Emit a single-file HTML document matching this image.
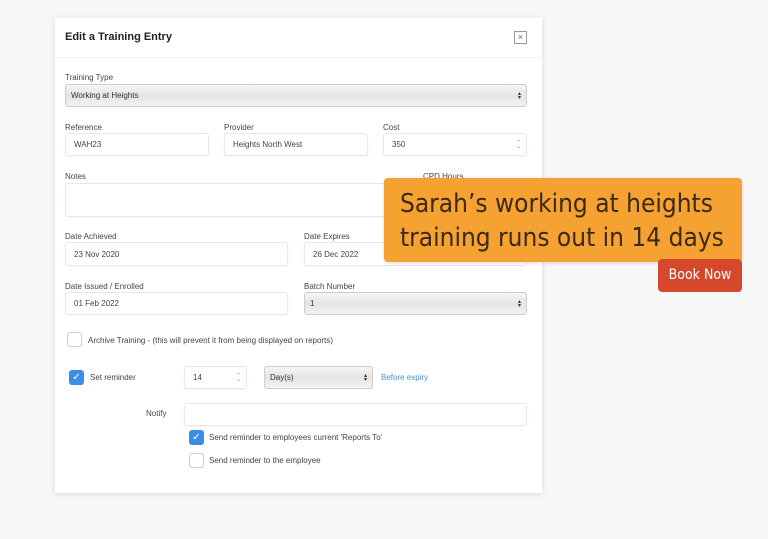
<!DOCTYPE html>
<html><head><meta charset="utf-8"><style>
*{box-sizing:border-box;margin:0;padding:0}
body{width:768px;height:539px;background:#f7f7f7;font-family:"Liberation Sans",sans-serif;color:#333;position:relative;overflow:hidden}
.a{position:absolute}
.modal{left:55px;top:18px;width:487px;height:475px;background:#fff;box-shadow:0 1px 6px rgba(0,0,0,.12)}
.hdr{left:55px;top:18px;width:487px;height:40px;border-bottom:1px solid #f0f0f0}
.lbl{font-size:8px;color:#444}
.in{border:1px solid #e8e8e8;border-radius:3px;background:#fff;font-size:8px;color:#444;padding-left:8px;display:flex;align-items:center;box-shadow:0 1px 2px rgba(0,0,0,.04)}
.sel{border:1px solid #ccc;border-radius:3px;background:linear-gradient(#f6f6f6,#e4e4e4 50%,#f2f2f2);font-size:8px;color:#333;padding-left:5px;display:flex;align-items:center}
.arr{position:absolute;right:5px;top:50%;transform:translateY(-50%);font-size:6px;line-height:4px;color:#333}
.cb{width:15px;height:15px;border:1px solid #ccc;border-radius:3px;background:#fff}
.cbc{width:15px;height:15px;border-radius:3px;background:#3a8ee6;color:#fff;font-size:10px;line-height:15px;text-align:center}
</style></head><body>
<div class="a modal"></div>
<div class="a hdr"></div>
<div class="a" style="left:65px;top:31px;font-size:11px;font-weight:600;color:#222">Edit a Training Entry</div>
<div class="a" style="left:514px;top:31px;width:13px;height:13px;border:1px solid #999;font-size:9px;line-height:11px;text-align:center;color:#666">×</div>

<div class="a lbl" style="left:65px;top:73px">Training Type</div>
<div class="a sel" style="left:65px;top:84px;width:462px;height:23px">Working at Heights<span class="arr">▴<br>▾</span></div>

<div class="a lbl" style="left:65px;top:123px">Reference</div>
<div class="a lbl" style="left:224px;top:123px">Provider</div>
<div class="a lbl" style="left:383px;top:123px">Cost</div>
<div class="a in" style="left:65px;top:133px;width:144px;height:23px">WAH23</div>
<div class="a in" style="left:224px;top:133px;width:144px;height:23px">Heights North West</div>
<div class="a in" style="left:383px;top:133px;width:144px;height:23px">350<span class="arr" style="color:#888">⌃<br>⌄</span></div>

<div class="a lbl" style="left:65px;top:172px">Notes</div>
<div class="a lbl" style="left:423px;top:172px">CPD Hours</div>
<div class="a in" style="left:65px;top:183px;width:462px;height:34px"></div>

<div class="a lbl" style="left:65px;top:232px">Date Achieved</div>
<div class="a lbl" style="left:304px;top:232px">Date Expires</div>
<div class="a in" style="left:65px;top:242px;width:223px;height:24px">23 Nov 2020</div>
<div class="a in" style="left:304px;top:242px;width:223px;height:24px">26 Dec 2022</div>

<div class="a lbl" style="left:65px;top:282px">Date Issued / Enrolled</div>
<div class="a lbl" style="left:304px;top:282px">Batch Number</div>
<div class="a in" style="left:65px;top:292px;width:223px;height:23px">01 Feb 2022</div>
<div class="a sel" style="left:304px;top:292px;width:223px;height:23px">1<span class="arr">▴<br>▾</span></div>

<div class="a cb" style="left:67px;top:332px"></div>
<div class="a lbl" style="left:88px;top:336px">Archive Training - (this will prevent it from being displayed on reports)</div>

<div class="a cbc" style="left:69px;top:370px">✓</div>
<div class="a lbl" style="left:90px;top:373px">Set reminder</div>
<div class="a in" style="left:184px;top:366px;width:63px;height:23px">14<span class="arr" style="color:#888">⌃<br>⌄</span></div>
<div class="a sel" style="left:264px;top:366px;width:109px;height:23px">Day(s)<span class="arr">▴<br>▾</span></div>
<div class="a" style="left:381px;top:373px;font-size:8px;color:#4a90d9">Before expiry</div>

<div class="a lbl" style="left:146px;top:409px">Notify</div>
<div class="a in" style="left:184px;top:403px;width:343px;height:23px"></div>
<div class="a cbc" style="left:189px;top:430px">✓</div>
<div class="a lbl" style="left:209px;top:433px">Send reminder to employees current 'Reports To'</div>
<div class="a cb" style="left:189px;top:453px"></div>
<div class="a lbl" style="left:209px;top:456px">Send reminder to the employee</div>

<div class="a" style="left:384px;top:178px;width:358px;height:84px;background:#f6a233;border-radius:4px;box-shadow:0 1px 3px rgba(0,0,0,.15)"></div>
<div class="a" style="left:400px;top:187px;font-size:26px;line-height:34px;color:#3b2a12;font-family:'DejaVu Sans Condensed','Liberation Sans',sans-serif;white-space:nowrap">Sarah’s working at heights<br>training runs out in 14 days</div>
<div class="a" style="left:658px;top:259px;width:84px;height:33px;background:#d5482c;border-radius:4px;color:#fff;font-size:14px;line-height:33px;text-align:center;font-family:'DejaVu Sans Condensed','Liberation Sans',sans-serif;font-weight:300">Book Now</div>
</body></html>
